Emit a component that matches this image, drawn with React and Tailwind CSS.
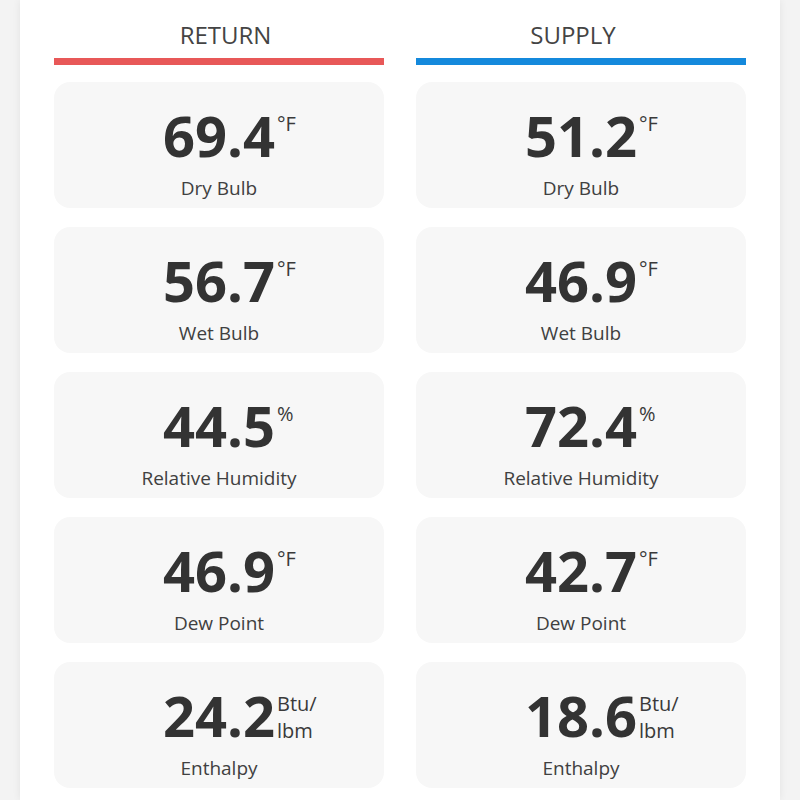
import React from "react";

const ret = [
  { v: "69.4", u: ["°F"], l: "Dry Bulb" },
  { v: "56.7", u: ["°F"], l: "Wet Bulb" },
  { v: "44.5", u: ["%"], l: "Relative Humidity" },
  { v: "46.9", u: ["°F"], l: "Dew Point" },
  { v: "24.2", u: ["Btu/", "lbm"], l: "Enthalpy" },
];
const sup = [
  { v: "51.2", u: ["°F"], l: "Dry Bulb" },
  { v: "46.9", u: ["°F"], l: "Wet Bulb" },
  { v: "72.4", u: ["%"], l: "Relative Humidity" },
  { v: "42.7", u: ["°F"], l: "Dew Point" },
  { v: "18.6", u: ["Btu/", "lbm"], l: "Enthalpy" },
];

function Card({ d }) {
  return (
    <div className="h-[126px] rounded-[16px] bg-[#f7f7f7] flex flex-col items-center pt-[25px]">
      <div className="relative text-[56px] leading-[56px] font-bold text-[#333333]">
        {d.v}
        <div className="absolute left-full top-[3px] ml-[2px] text-[20px] leading-[27px] font-normal text-[#3a3a3a] whitespace-nowrap">
          {d.u.map((x) => (
            <div key={x}>{x}</div>
          ))}
        </div>
      </div>
      <div className="mt-[13px] text-[19px] leading-[24px] text-[#404040]">{d.l}</div>
    </div>
  );
}

function Column({ title, color, data, shift }) {
  return (
    <div className="flex flex-col">
      <div className={`h-[32px] text-center text-[24px] leading-[32px] text-[#444444] ${shift}`}>{title}</div>
      <div className={`mt-[7px] h-[7px] ${color}`} />
      <div className="mt-[17px] flex flex-col gap-[19px]">
        {data.map((d) => (
          <Card key={d.l} d={d} />
        ))}
      </div>
    </div>
  );
}

export default function App() {
  return (
    <div
      className="w-[800px] h-[800px] overflow-hidden bg-[#f3f3f3] flex"
      style={{ fontFamily: '"Open Sans", "Noto Sans", sans-serif' }}
    >
      <div className="mx-[20px] flex-1 bg-white shadow-[0_0_8px_rgba(0,0,0,0.07)] pt-[19px] px-[34px]">
        <div className="grid grid-cols-2 gap-[32px]">
          <Column title="RETURN" color="bg-[#e85858]" data={ret} shift="pl-[13px]" />
          <Column title="SUPPLY" color="bg-[#1489dc]" data={sup} shift="pr-[16px]" />
        </div>
      </div>
    </div>
  );
}
